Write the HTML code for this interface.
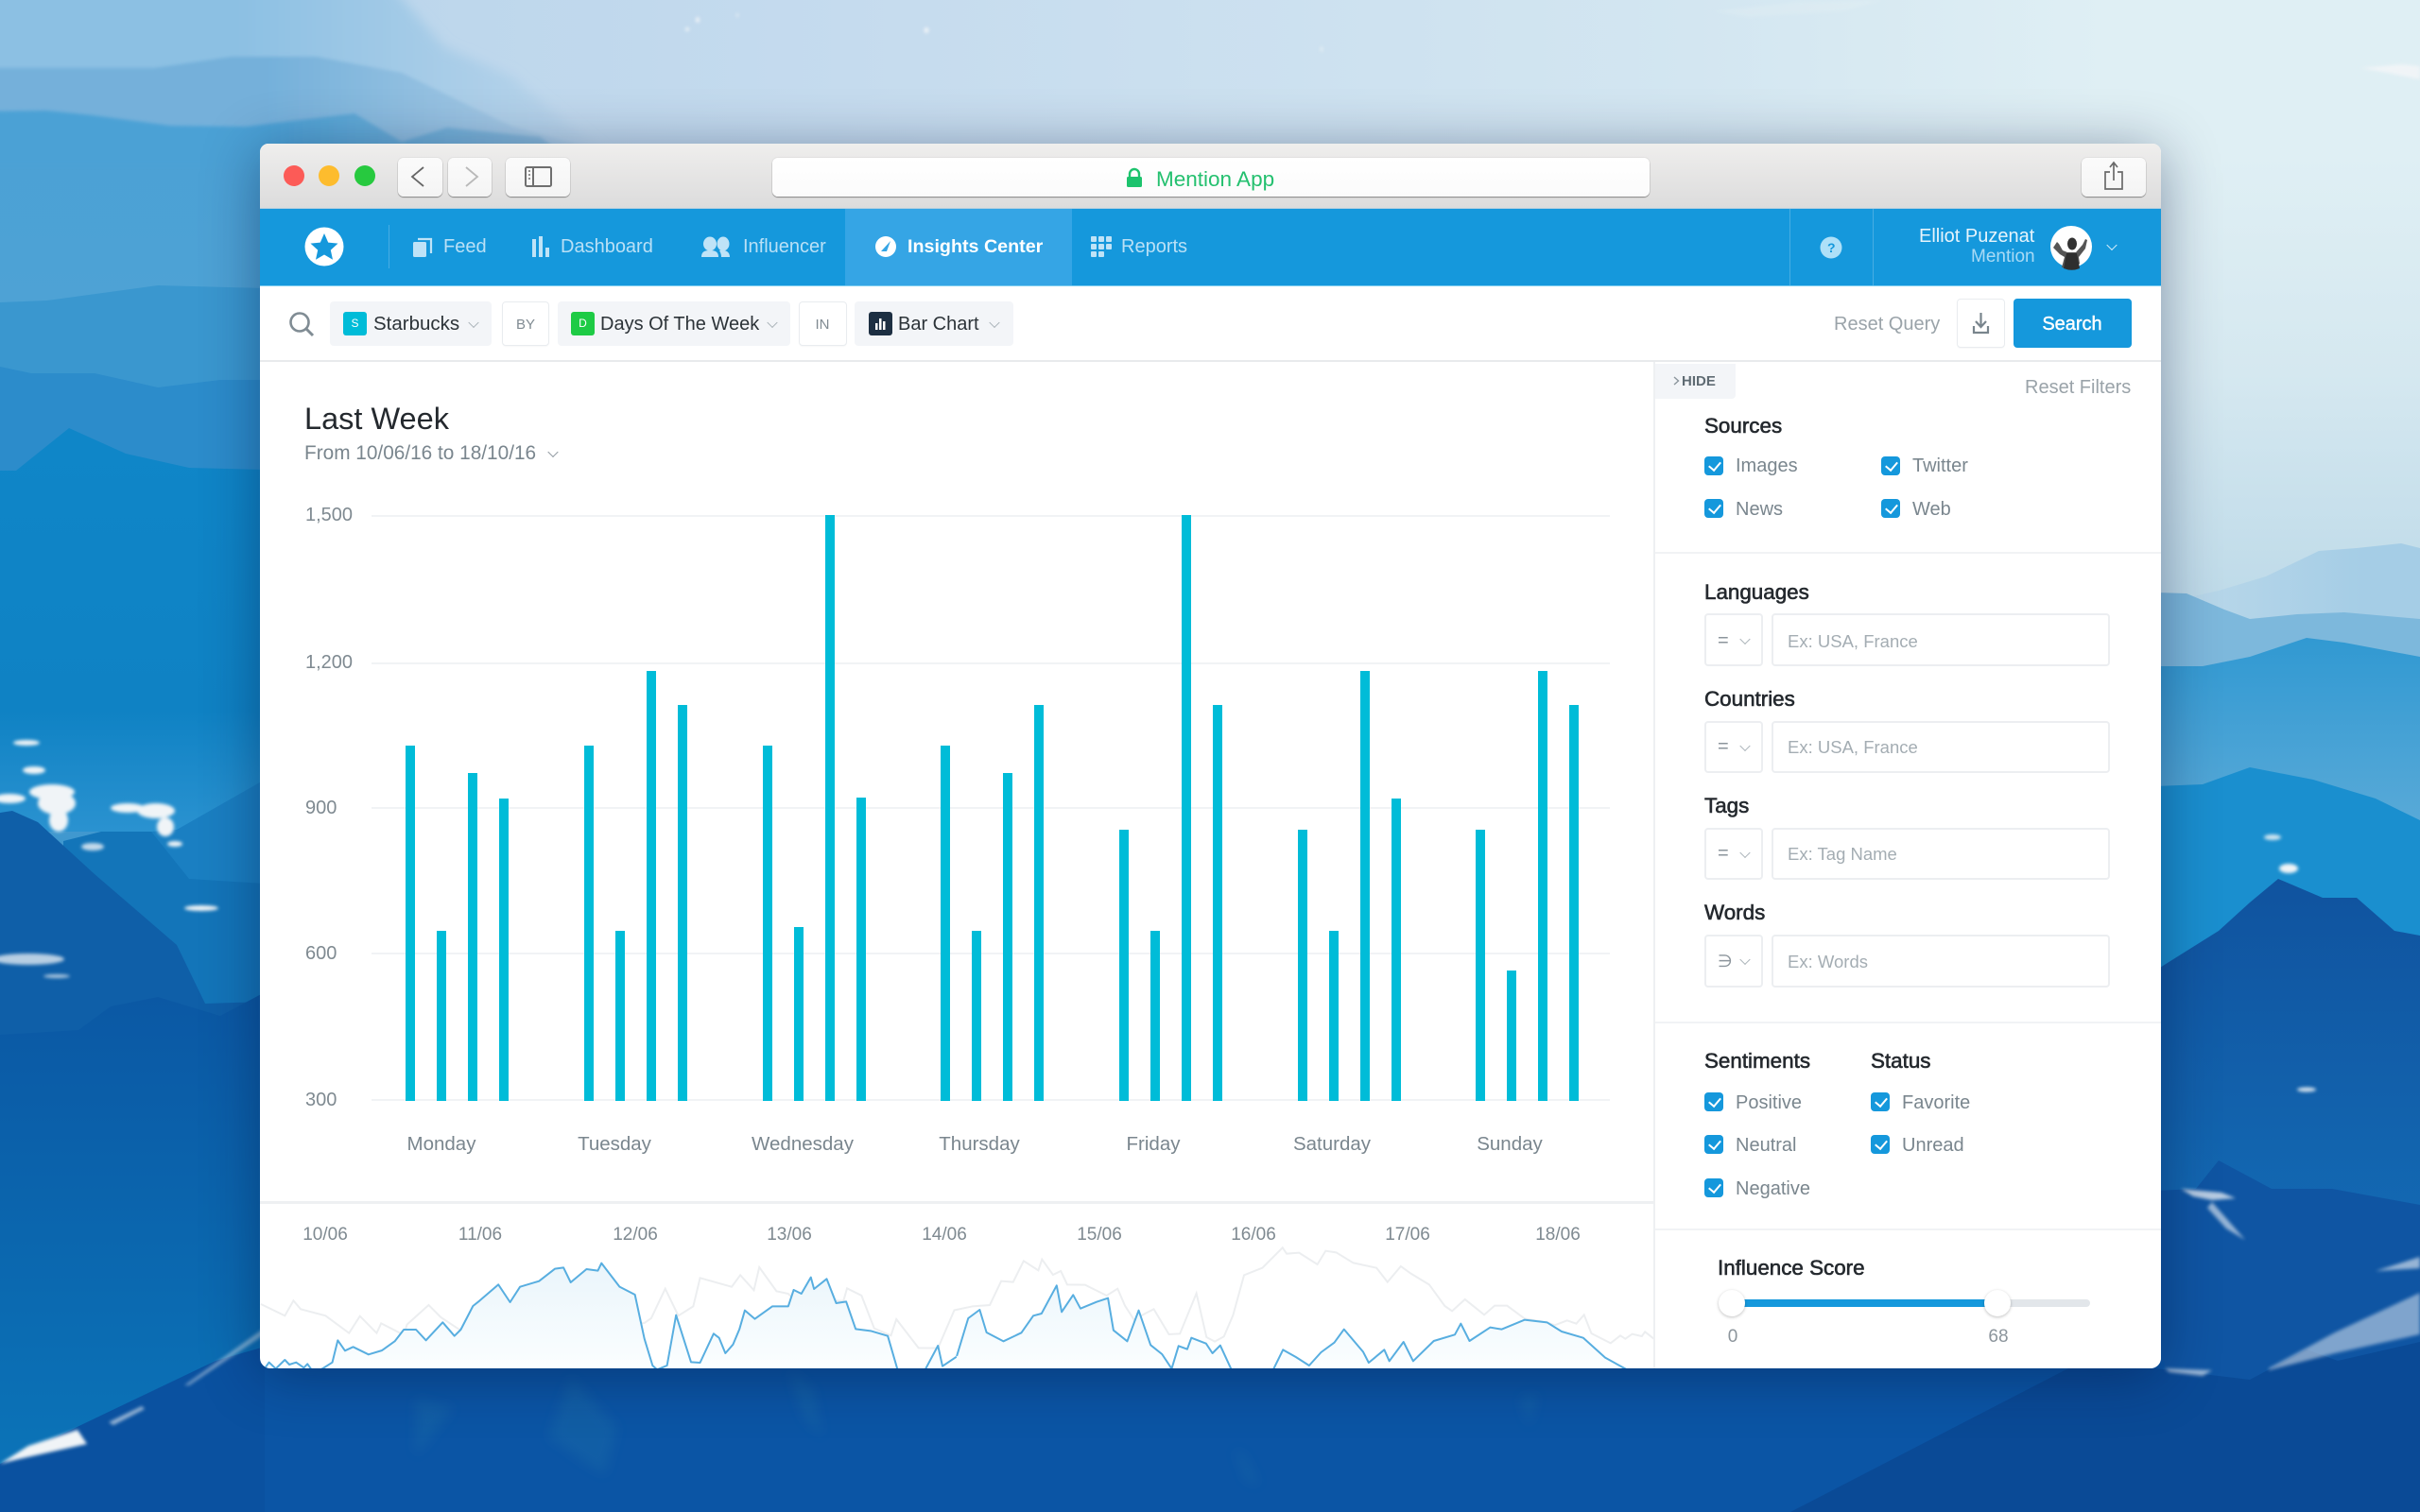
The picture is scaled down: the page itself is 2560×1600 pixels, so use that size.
<!DOCTYPE html>
<html><head><meta charset="utf-8"><title>Mention App</title>
<style>
*{box-sizing:border-box}
html,body{margin:0;padding:0;width:2560px;height:1600px;overflow:hidden;background:#0a55a5;font-family:"Liberation Sans",sans-serif}
#bg{position:absolute;left:0;top:0}
#win{position:absolute;left:275px;top:152px;width:2011px;height:1296px;border-radius:9px 9px 11px 11px;overflow:hidden;background:#fff;box-shadow:0 8px 60px rgba(0,20,60,.42)}
#in{position:absolute;left:-275px;top:-152px;width:2560px;height:1600px}
.b{position:absolute}
.t{position:absolute;line-height:0;white-space:nowrap;font-size:20px;color:#7a868e;margin-top:1px}
.n{color:#b9e0f6}
.h{font-size:22.4px;color:#24292e;-webkit-text-stroke:.6px #24292e}
.p{font-size:18.5px;color:#a4adb3}
.y{color:#7f8a91}
.d{font-size:19px;color:#7f8a91;transform:translateX(-50%)}
.x{transform:translateX(-50%)}
.mac{position:absolute;top:167px;height:41px;background:linear-gradient(#fbfbfb,#f4f4f4);border-radius:6px;box-shadow:0 1px 1px rgba(0,0,0,.38),0 0 0 1px rgba(0,0,0,.04)}
.chip{position:absolute;top:319px;height:47px;background:#f3f5f8;border-radius:4px}
.tag{position:absolute;top:319px;height:47px;background:#fff;border:1px solid #e9ecef;border-radius:4px;box-shadow:0 1px 1px rgba(0,0,0,.03)}
.bd{position:absolute;top:330px;height:25px;width:25px;border-radius:3px;color:#fff;font-size:12px;line-height:25px;text-align:center}
.v{position:absolute;width:8px;height:8px;border:solid #a9b2b8;border-width:0 1.5px 1.5px 0;transform:translate(-50%,-70%) rotate(45deg)}
.c{position:absolute;width:20px;height:20px;border-radius:4px;background:#1598dc;transform:translateY(-50%)}
.c:after{content:"";position:absolute;left:7px;top:3px;width:6px;height:10px;border:solid #fff;border-width:0 2px 2px 0;transform:rotate(40deg)}
.sel,.inp{position:absolute;background:#fff;border:2px solid #eceef1;border-radius:4px}
.sel{left:1803px;width:62px}
.inp{left:1874px;width:358px}
.line{position:absolute;background:#f1f3f5}
</style></head><body>

<svg id="bg" width="2560" height="1600" viewBox="0 0 2560 1600" xmlns="http://www.w3.org/2000/svg">
<defs>
<linearGradient id="sky" x1="0" y1="0" x2="1" y2="0"><stop offset="0" stop-color="#b5d2ea"/><stop offset=".35" stop-color="#c5dbee"/><stop offset=".7" stop-color="#d3e6f1"/><stop offset=".87" stop-color="#dfeff4"/><stop offset="1" stop-color="#dfeff4"/></linearGradient>
<linearGradient id="skyr" x1="0" y1="0" x2="0" y2="1"><stop offset="0" stop-color="#dfeff4"/><stop offset=".25" stop-color="#dfeff4"/><stop offset=".6" stop-color="#d5e8f0"/><stop offset="1" stop-color="#bcd9e8"/></linearGradient>
<linearGradient id="t0" gradientUnits="userSpaceOnUse" x1="250" y1="0" x2="640" y2="0"><stop offset="0" stop-color="#8cc0e3"/><stop offset="1" stop-color="#bdd6eb"/></linearGradient>
<linearGradient id="t1" gradientUnits="userSpaceOnUse" x1="280" y1="0" x2="640" y2="0"><stop offset="0" stop-color="#74b0da"/><stop offset="1" stop-color="#b5d1e8"/></linearGradient>
<linearGradient id="t2" gradientUnits="userSpaceOnUse" x1="280" y1="0" x2="600" y2="0"><stop offset="0" stop-color="#4ba1d5"/><stop offset="1" stop-color="#8fbcdc"/></linearGradient>
<linearGradient id="l5" x1="0" y1="0" x2="0" y2="1"><stop offset="0" stop-color="#0f86c8"/><stop offset=".7" stop-color="#0f82c4"/><stop offset="1" stop-color="#2a92d0"/></linearGradient>
<linearGradient id="l8" x1="0" y1="0" x2="0" y2="1"><stop offset="0" stop-color="#0b58a4"/><stop offset="1" stop-color="#0b74b8"/></linearGradient>
<linearGradient id="rc" x1="0" y1="0" x2="0" y2="1"><stop offset="0" stop-color="#3199d2"/><stop offset="1" stop-color="#5aaad8"/></linearGradient>
<linearGradient id="re" x1="0" y1="0" x2="0" y2="1"><stop offset="0" stop-color="#10539f"/><stop offset="1" stop-color="#1369b3"/></linearGradient>
<linearGradient id="ld" x1="0" y1="0" x2="0" y2="1"><stop offset="0" stop-color="#4ba1d5"/><stop offset=".2" stop-color="#4ea2d5"/><stop offset="1" stop-color="#3a94cc"/></linearGradient>
<linearGradient id="ra" gradientUnits="userSpaceOnUse" x1="2290" y1="0" x2="2500" y2="0"><stop offset="0" stop-color="#bcd9ea"/><stop offset="1" stop-color="#a5cde6"/></linearGradient>
<filter id="bl" x="-30%" y="-30%" width="160%" height="160%"><feGaussianBlur stdDeviation="1.8"/></filter>
<filter id="bm" x="-40%" y="-40%" width="180%" height="180%"><feGaussianBlur stdDeviation="6"/></filter>
</defs>
<rect width="2560" height="1600" fill="url(#sky)"/>
<rect x="2240" width="320" height="660" fill="url(#skyr)"/>
<!-- top left -->
<polygon points="-40,-40 392,-40 470,50 540,80 660,180 -40,180" fill="url(#t0)" filter="url(#bm)"/>
<polygon points="-20,72 163,72 245,60 335,60 425,77 540,133 637,160 -20,160" fill="url(#t1)" filter="url(#bl)"/>
<rect y="140" width="275" height="980" fill="url(#ld)"/>
<polygon points="-20,118 49,117 98,122 180,133 260,134 375,120 425,150 473,135 571,145 600,165 600,175 -20,175" fill="url(#t2)" filter="url(#bl)"/>
<!-- left strip -->
<polygon points="0,320 50,318 167,302 280,305 280,500 0,500" fill="#3a97cf"/>
<polygon points="0,388 33,395 100,395 167,410 233,402 280,402 280,520 0,520" fill="#2c8ccb"/>
<polygon points="0,498 17,498 73,453 133,480 200,495 280,497 280,880 0,880" fill="url(#l5)"/>
<polygon points="160,880 187,878 280,825 280,1100 160,1100" fill="#1a7fc2"/>
<polygon points="67,890 107,880 160,880 200,930 280,935 280,1100 67,1100" fill="#1375b9"/>
<polygon points="0,860 13,858 40,870 100,925 187,1000 217,1062 280,1060 280,1120 0,1120" fill="#0f5fa8"/>
<polygon points="0,1095 83,1090 117,1065 167,1055 233,1075 280,1050 280,1560 0,1560" fill="url(#l8)"/>
<!-- right side -->
<polygon points="2280,640 2347,625 2397,610 2453,583 2493,580 2540,575 2560,580 2560,700 2280,700" fill="url(#ra)"/>
<polygon points="2280,627 2313,628 2353,645 2380,655 2430,650 2480,648 2560,655 2560,760 2280,760" fill="#7db8dc"/>
<polygon points="2280,705 2330,705 2380,695 2440,675 2480,680 2560,695 2560,880 2280,880" fill="url(#rc)"/>
<polygon points="2280,832 2330,830 2380,812 2447,825 2513,845 2560,868 2560,1060 2280,1060" fill="#1a8fcf"/>
<polygon points="2280,1027 2347,985 2380,955 2410,930 2457,950 2493,950 2533,985 2560,990 2560,1300 2280,1300" fill="url(#re)"/>
<polygon points="2280,1260 2323,1258 2347,1228 2403,1258 2467,1258 2560,1275 2560,1460 2280,1460" fill="#0f55a3"/>
<!-- bottom -->
<rect x="270" y="1440" width="2020" height="160" fill="#0b55a5"/>
<polygon points="0,1549 228,1440 280,1425 280,1600 0,1600" fill="#0a51a0"/>
<polygon points="1894,1600 2188,1448 2280,1448 2380,1460 2440,1428 2473,1440 2560,1420 2560,1600" fill="#0a4a96"/>
<g fill="#2a7ea8" filter="url(#bm)" opacity=".22">
<polygon points="604,1457 625,1480 653,1510 640,1560 625,1552 580,1520"/>
<polygon points="835,1450 860,1470 870,1520 850,1500"/>
<polygon points="1306,1533 1316,1540 1332,1572 1318,1566"/>
<polygon points="1608,1480 1626,1475 1618,1510"/>
<polygon points="440,1480 480,1490 440,1540"/>
</g>
<!-- clouds -->
<g fill="#f0f4f7" filter="url(#bl)">
<ellipse cx="28" cy="786" rx="14" ry="3"/>
<ellipse cx="36" cy="815" rx="12" ry="4"/>
<ellipse cx="10" cy="845" rx="17" ry="5"/>
<ellipse cx="55" cy="838" rx="24" ry="8"/><ellipse cx="60" cy="850" rx="20" ry="12"/><ellipse cx="62" cy="868" rx="10" ry="12"/>
<ellipse cx="135" cy="855" rx="18" ry="5"/><ellipse cx="165" cy="858" rx="20" ry="8"/><ellipse cx="175" cy="875" rx="9" ry="10"/><ellipse cx="185" cy="893" rx="8" ry="3"/>
<ellipse cx="98" cy="896" rx="12" ry="4" opacity=".8"/>
<ellipse cx="213" cy="961" rx="18" ry="3"/>
<ellipse cx="30" cy="1015" rx="38" ry="6" opacity=".75"/><ellipse cx="60" cy="1033" rx="14" ry="2" opacity=".7"/>
<polygon points="0,1549 30,1530 82,1513 92,1528 20,1544"/>
<polygon points="115,1505 150,1488 153,1491 120,1508" opacity=".6"/>
<polygon points="195,1466 280,1405 280,1412 200,1466" opacity=".45"/>
<ellipse cx="2404" cy="886" rx="9" ry="3" opacity=".85"/>
<ellipse cx="2421" cy="919" rx="10" ry="5"/>
<ellipse cx="2440" cy="1153" rx="10" ry="2.500" opacity=".85"/>
<polygon points="2307,1258 2350,1262 2365,1268 2340,1270 2320,1266" opacity=".75"/>
<polygon points="2340,1272 2375,1312 2355,1300 2335,1278" opacity=".6"/>
<polygon points="2513,1345 2560,1330 2560,1342" opacity=".6"/>
<polygon points="2400,1448 2470,1410 2560,1368 2560,1412 2470,1432 2400,1450" opacity=".5"/>
<polygon points="2290,1448 2340,1450 2330,1456 2295,1452" opacity=".6"/>
<polygon points="2497,72 2540,68 2560,70 2560,84 2520,76"/>
<polygon points="1812,12 1900,2 1992,0 1950,12 1850,18" opacity=".2"/>
<ellipse cx="738" cy="21" rx="2" ry="3"/><ellipse cx="980" cy="32" rx="2.500" ry="3"/><ellipse cx="727" cy="31" rx="2" ry="2"/><ellipse cx="780" cy="16" rx="1" ry="2"/><ellipse cx="1398" cy="52" rx="1" ry="3"/>
</g>
</svg>

<div id="win"><div id="in">

<!-- title bar -->
<div class="b" style="left:275px;top:152px;width:2011px;height:69px;background:linear-gradient(#efeeed,#dcdcdc);border-bottom:1px solid #b4cfdf"></div>
<div class="b" style="left:300px;top:175px;width:22px;height:22px;border-radius:50%;background:#fc5b57"></div>
<div class="b" style="left:337px;top:175px;width:22px;height:22px;border-radius:50%;background:#fdbc2e"></div>
<div class="b" style="left:375px;top:175px;width:22px;height:22px;border-radius:50%;background:#27c93f"></div>
<div class="mac" style="left:421px;width:47px"></div>
<div class="mac" style="left:474px;width:46px"></div>
<div class="mac" style="left:535px;width:68px"></div>
<div class="mac" style="left:817px;width:928px;background:linear-gradient(#ffffff,#fbfbfb)"></div>
<div class="mac" style="left:2202px;width:68px"></div>
<svg class="b" style="left:0;top:0" width="2560" height="240" fill="none">
<path d="M448 177 L436 187 L448 197" stroke="#666" stroke-width="1.800"/>
<path d="M493 177 L505 187 L493 197" stroke="#b9b9b9" stroke-width="1.800"/>
<rect x="556" y="177" width="27" height="20" rx="1.500" stroke="#6f6f6f" stroke-width="2"/><path d="M564 177 V197" stroke="#6f6f6f" stroke-width="2"/><path d="M559 181h2M559 185h2M559 189h2" stroke="#6f6f6f" stroke-width="1.500"/>
<path d="M2232 182 H2227 V200 H2245 V182 H2240 M2236 191 V173 M2232 177 L2236 172 L2240 177" stroke="#6a6a6a" stroke-width="1.700"/>
<rect x="1192" y="187" width="16" height="11" rx="1.500" fill="#1dc36d"/><path d="M1195 188 V184 a5 5 0 0 1 10 0 V188" stroke="#1dc36d" stroke-width="2.400"/>
</svg>
<div class="t" style="left:1223px;top:188.500px;font-size:22.500px;color:#24c06f">Mention App</div>

<!-- nav -->
<div class="b" style="left:275px;top:221px;width:2011px;height:82px;background:#1598dc;border-bottom:1px solid #7ccdf0"></div>
<div class="b" style="left:894px;top:221px;width:240px;height:81px;background:#35a5e5"></div>
<div class="b" style="left:411px;top:238px;width:1px;height:46px;background:#48ade3"></div>
<div class="b" style="left:1893px;top:221px;width:1px;height:81px;background:#48ade3"></div>
<div class="b" style="left:1981px;top:221px;width:1px;height:81px;background:#48ade3"></div>
<svg class="b" style="left:0;top:0" width="2560" height="303">
<circle cx="343" cy="261" r="20.500" fill="#fff"/>
<polygon points="343,247 347.200,256.600 357.500,257.600 349.800,264.600 352,274.800 343,269.500 334,274.800 336.200,264.600 328.500,257.600 338.800,256.600" fill="#1598dc"/>
<rect x="437" y="256" width="14" height="16" rx="1.500" fill="#bfe3f7"/><path d="M442 253 H456 V268" fill="none" stroke="#bfe3f7" stroke-width="2.200"/>
<rect x="563" y="253" width="4" height="19" fill="#bfe3f7"/><rect x="570" y="250" width="4" height="22" fill="#bfe3f7"/><rect x="577" y="262" width="4" height="10" fill="#bfe3f7"/>
<g fill="#bfe3f7"><ellipse cx="751" cy="258" rx="7" ry="7.500"/><path d="M742 272 c0-6 4-7 9-7 s9 1 9 7z"/><ellipse cx="765" cy="258" rx="6.500" ry="7.500"/><path d="M761 265 c6-1 11 1 11 7 h-9 c0-3-1-5-2-7z"/></g>
<circle cx="937" cy="261" r="11" fill="#fff"/><path d="M932 266 L942 255 L938 266z" fill="#35a5e5"/>
<g fill="#bfe3f7"><rect x="1154" y="250" width="6" height="6" rx="1"/><rect x="1162" y="250" width="6" height="6" rx="1"/><rect x="1170" y="250" width="6" height="6" rx="1"/><rect x="1154" y="258" width="6" height="6" rx="1"/><rect x="1162" y="258" width="6" height="6" rx="1"/><rect x="1170" y="258" width="6" height="6" rx="1"/><rect x="1154" y="266" width="6" height="6" rx="1"/><rect x="1162" y="266" width="6" height="6" rx="1"/></g>
<circle cx="1937" cy="262" r="11.500" fill="#aee0f8"/>
<circle cx="2191" cy="261" r="22" fill="#fff"/>
<path d="M2172 262 l4-6 2 2 4 7 5 2 h9 l7-8 3-6 2 1 -2 9 -7 9 1 7 a22 22 0 0 1 -19 4 l3-11 -5-3z" fill="#555"/>
<path d="M2186 268 h11 l3 16 a22 22 0 0 1 -17 0z" fill="#2e2e2e"/>
<ellipse cx="2192" cy="258" rx="5" ry="6.500" fill="#333"/>
</svg>
<div class="t n" style="left:469px;top:260px">Feed</div>
<div class="t n" style="left:593px;top:260px">Dashboard</div>
<div class="t n" style="left:786px;top:260px">Influencer</div>
<div class="t" style="left:960px;top:260px;color:#fff;font-weight:700;font-size:19.700px">Insights Center</div>
<div class="t n" style="left:1186px;top:260px">Reports</div>
<div class="t" style="left:1933px;top:261px;font-size:14px;font-weight:700;color:#1598dc">?</div>
<div class="t" style="left:2030px;top:249px;font-size:20px;color:#e6f4fc">Elliot Puzenat</div>
<div class="t" style="left:2085px;top:271px;font-size:19px;color:#a9daf5">Mention</div>
<div class="v" style="left:2234px;top:261px;border-color:#dff2fc"></div>

<!-- toolbar -->
<div class="b" style="left:275px;top:303px;width:2011px;height:80px;background:#fff;border-bottom:2px solid #e8eaec"></div>
<svg class="b" style="left:0;top:0" width="340" height="370" fill="none"><circle cx="317" cy="341" r="9.500" stroke="#808c94" stroke-width="2.600"/><path d="M324 348 L331 355" stroke="#808c94" stroke-width="3"/></svg>
<div class="chip" style="left:349px;width:171px"></div>
<div class="bd" style="left:363px;background:#00bcd8">S</div>
<div class="t" style="left:395px;top:342px;font-size:20.500px;color:#2c3338">Starbucks</div>
<div class="v" style="left:501px;top:343px"></div>
<div class="tag" style="left:531px;width:50px"></div>
<div class="t x" style="left:556px;top:343px;font-size:15px;color:#808b92">BY</div>
<div class="chip" style="left:590px;width:246px"></div>
<div class="bd" style="left:604px;background:#1ecb45">D</div>
<div class="t" style="left:635px;top:342px;color:#2c3338">Days Of The Week</div>
<div class="v" style="left:817px;top:343px"></div>
<div class="tag" style="left:845px;width:51px"></div>
<div class="t x" style="left:870px;top:343px;font-size:15px;color:#808b92">IN</div>
<div class="chip" style="left:904px;width:168px"></div>
<div class="bd" style="left:919px;background:#1d2f42"></div>
<svg class="b" style="left:919px;top:330px" width="25" height="25"><rect x="7" y="12" width="2.500" height="7" fill="#fff"/><rect x="11" y="7" width="2.500" height="12" fill="#fff"/><rect x="15" y="10" width="2.500" height="9" fill="#fff"/></svg>
<div class="t" style="left:950px;top:342px;color:#2c3338">Bar Chart</div>
<div class="v" style="left:1052px;top:343px"></div>
<div class="t" style="left:1940px;top:342px;color:#9aa3a9">Reset Query</div>
<div class="tag" style="left:2070px;top:316px;width:51px;height:52px"></div>
<svg class="b" style="left:2070px;top:316px" width="51" height="52" fill="none"><path d="M25.500 15 V29 M20 24 L25.500 30 L31 24" stroke="#79858d" stroke-width="2.200"/><path d="M18 29 V36 H33 V29" stroke="#79858d" stroke-width="2.200"/></svg>
<div class="b" style="left:2130px;top:316px;width:125px;height:52px;background:#1598dc;border-radius:4px"></div>
<div class="t x" style="left:2192px;top:342px;color:#fff;-webkit-text-stroke:.4px #fff">Search</div>

<!-- main -->
<div class="t" style="left:322px;top:442px;font-size:32.500px;color:#24292e">Last Week</div>
<div class="t" style="left:322px;top:479px;font-size:20.800px;color:#7a868e">From 10/06/16 to 18/10/16</div>
<div class="v" style="left:585px;top:480px;border-color:#8c969d"></div>
<div class="t y" style="left:323px;top:544px">1,500</div>
<div class="t y" style="left:323px;top:700px">1,200</div>
<div class="t y" style="left:323px;top:854px">900</div>
<div class="t y" style="left:323px;top:1008px">600</div>
<div class="t y" style="left:323px;top:1163px">300</div>
<div class="line" style="left:393px;top:545px;width:1310px;height:2px"></div>
<div class="line" style="left:393px;top:701px;width:1310px;height:2px"></div>
<div class="line" style="left:393px;top:854px;width:1310px;height:2px"></div>
<div class="line" style="left:393px;top:1008px;width:1310px;height:2px"></div>
<div class="line" style="left:393px;top:1163px;width:1310px;height:2px"></div>
<svg class="b" style="left:0;top:0" width="1750" height="1170" fill="#00bcd8">
<rect x="429" y="789" width="10" height="376"/><rect x="462" y="985" width="10" height="180"/><rect x="495" y="818" width="10" height="347"/><rect x="528" y="845" width="10" height="320"/>
<rect x="618" y="789" width="10" height="376"/><rect x="651" y="985" width="10" height="180"/><rect x="684" y="710" width="10" height="455"/><rect x="717" y="746" width="10" height="419"/>
<rect x="807" y="789" width="10" height="376"/><rect x="840" y="981" width="10" height="184"/><rect x="873" y="545" width="10" height="620"/><rect x="906" y="844" width="10" height="321"/>
<rect x="995" y="789" width="10" height="376"/><rect x="1028" y="985" width="10" height="180"/><rect x="1061" y="818" width="10" height="347"/><rect x="1094" y="746" width="10" height="419"/>
<rect x="1184" y="878" width="10" height="287"/><rect x="1217" y="985" width="10" height="180"/><rect x="1250" y="545" width="10" height="620"/><rect x="1283" y="746" width="10" height="419"/>
<rect x="1373" y="878" width="10" height="287"/><rect x="1406" y="985" width="10" height="180"/><rect x="1439" y="710" width="10" height="455"/><rect x="1472" y="845" width="10" height="320"/>
<rect x="1561" y="878" width="10" height="287"/><rect x="1594" y="1027" width="10" height="138"/><rect x="1627" y="710" width="10" height="455"/><rect x="1660" y="746" width="10" height="419"/>
</svg>
<div class="t x" style="left:467px;top:1210px;font-size:20.500px">Monday</div>
<div class="t x" style="left:650px;top:1210px;font-size:20.500px">Tuesday</div>
<div class="t x" style="left:849px;top:1210px;font-size:20.500px">Wednesday</div>
<div class="t x" style="left:1036px;top:1210px;font-size:20.500px">Thursday</div>
<div class="t x" style="left:1220px;top:1210px;font-size:20.500px">Friday</div>
<div class="t x" style="left:1409px;top:1210px;font-size:20.500px">Saturday</div>
<div class="t x" style="left:1597px;top:1210px;font-size:20.500px">Sunday</div>

<!-- overview -->
<div class="b" style="left:275px;top:1271px;width:1475px;height:3px;background:#eef0f2"></div>
<div class="t d" style="left:344px;top:1306px">10/06</div>
<div class="t d" style="left:508px;top:1306px">11/06</div>
<div class="t d" style="left:672px;top:1306px">12/06</div>
<div class="t d" style="left:835px;top:1306px">13/06</div>
<div class="t d" style="left:999px;top:1306px">14/06</div>
<div class="t d" style="left:1163px;top:1306px">15/06</div>
<div class="t d" style="left:1326px;top:1306px">16/06</div>
<div class="t d" style="left:1489px;top:1306px">17/06</div>
<div class="t d" style="left:1648px;top:1306px">18/06</div>
<svg class="b" style="left:0;top:0" width="1760" height="1448" fill="none">
<defs><linearGradient id="af" gradientUnits="userSpaceOnUse" x1="0" y1="230" x2="0" y2="570"><stop offset="0" stop-color="#eaf5fb"/><stop offset="1" stop-color="#fbfeff"/></linearGradient></defs>
<g transform="translate(275 1260) scale(.47847 .33333)">
<polyline vector-effect="non-scaling-stroke" stroke="#eceef0" stroke-width="2" points="2,360 55,397 74,349 90,376 145,397 197,452 221,398 258,452 268,421 318,458 325,425 373,363 400,402 440,440 850,420 865,405 896,311 925,397 958,367 973,277 1043,305 1062,268 1092,316 1104,243 1142,319 1168,327 1180,345 1290,350 1298,310 1330,333 1358,437 1395,460 1407,408 1456,499 1499,500 1535,380"/>
<polygon fill="url(#af)" points="2,570 20,545 35,565 55,537 65,552 80,545 97,562 105,550 115,565 138,565 160,545 172,475 188,508 206,496 240,520 270,507 298,478 318,441 345,441 367,475 404,418 430,461 444,441 471,366 485,350 527,298 553,354 575,305 617,287 652,248 671,244 687,291 722,249 747,254 755,230 795,305 829,330 850,470 868,555 878,568 900,555 920,395 953,544 973,546 1003,454 1015,467 1029,516 1046,488 1060,440 1072,380 1094,407 1133,367 1168,367 1180,315 1197,327 1218,275 1225,312 1253,280 1274,357 1296,352 1317,439 1350,445 1388,461 1410,570 1470,570 1499,492 1509,557 1542,527 1542,570"/>
<polyline vector-effect="non-scaling-stroke" stroke="#58aee0" stroke-width="2" stroke-linejoin="round" points="5,575 20,545 35,565 55,537 65,552 80,545 97,562 105,550 115,570"/>
<polyline vector-effect="non-scaling-stroke" stroke="#58aee0" stroke-width="2" stroke-linejoin="round" points="130,570 138,565 160,545 172,475 188,508 206,496 240,520 270,507 298,478 318,441 345,441 367,475 404,418 430,461 444,441 471,366 485,350 527,298 553,354 575,305 617,287 652,248 671,244 687,291 722,249 747,254 755,230 795,305 829,330 850,470 868,555 878,568 900,555 920,395 953,544 973,546 1003,454 1015,467 1029,516 1046,488 1060,440 1072,380 1094,407 1133,367 1168,367 1180,315 1197,327 1218,275 1225,312 1253,280 1274,357 1296,352 1317,439 1350,445 1388,461 1410,570"/>
<polyline vector-effect="non-scaling-stroke" stroke="#58aee0" stroke-width="2" stroke-linejoin="round" points="1470,570 1499,492 1509,557 1540,527"/>
</g>
<g transform="translate(1000 1260) scale(.48473 .33333)">
<polyline vector-effect="non-scaling-stroke" stroke="#eceef0" stroke-width="2" points="18,380 60,367 97,363 122,287 148,290 171,223 203,253 211,218 235,267 252,255 266,298 305,299 352,333 376,311 392,365 412,410 436,390 455,376 488,456 512,454 548,326 570,465 588,479 608,463 628,395 652,268 692,245 736,181 745,200 772,197 812,234 830,191 853,196 890,229 941,245 965,290 994,240 1016,263 1056,298 1090,366 1106,382 1134,345 1176,394 1199,365 1226,365 1264,406 1313,418 1330,427 1357,412 1377,422 1394,394 1410,453 1452,484 1473,460 1484,470 1499,455 1520,462 1527,448 1548,472"/>
<polygon fill="url(#af)" points="25,570 25,525 50,405 75,378 90,450 127,478 166,451 192,397 210,390 243,301 254,385 279,331 295,374 330,353 355,341 367,443 397,478 422,380 448,490 473,519 494,565 509,493 528,503 537,467 569,485 583,516 600,491 625,570 715,570 737,505 765,528 794,555 820,513 849,482 870,440 912,512 924,546 958,505 969,541 1000,480 1021,541 1066,477 1112,457 1125,422 1144,477 1189,434 1214,440 1264,410 1313,418 1345,447 1392,467 1440,530 1490,570"/>
<polyline vector-effect="non-scaling-stroke" stroke="#58aee0" stroke-width="2" stroke-linejoin="round" points="25,525 50,405 75,378 90,450 127,478 166,451 192,397 210,390 243,301 254,385 279,331 295,374 330,353 355,341 367,443 397,478 422,380 448,490 473,519 494,565 509,493 528,503 537,467 569,485 583,516 600,491 625,570"/>
<polyline vector-effect="non-scaling-stroke" stroke="#58aee0" stroke-width="2" stroke-linejoin="round" points="715,570 737,505 765,528 794,555 820,513 849,482 870,440 912,512 924,546 958,505 969,541 1000,480 1021,541 1066,477 1112,457 1125,422 1144,477 1189,434 1214,440 1264,410 1313,418 1345,447 1392,467 1440,530 1490,570"/>
</g>
</svg>

<!-- sidebar -->
<div class="b" style="left:1749px;top:383px;width:537px;height:1065px;background:#fff;border-left:2px solid #eef0f2"></div>
<div class="b" style="left:1751px;top:385px;width:85px;height:37px;background:#f3f5f8;border-radius:0 0 4px 0"></div>
<div class="t" style="left:1779px;top:403px;font-size:15px;font-weight:700;color:#5f6b73">HIDE</div>
<svg class="b" style="left:1768px;top:396px" width="10" height="14" fill="none"><path d="M3 3 L7.500 7 L3 11" stroke="#8b959c" stroke-width="1.400"/></svg>
<div class="t" style="left:2142px;top:409px;color:#9aa3a9">Reset Filters</div>
<div class="t h" style="left:1803px;top:450px">Sources</div>
<div class="c" style="left:1803px;top:492.500px"></div><div class="t" style="left:1836px;top:492px">Images</div>
<div class="c" style="left:1990px;top:492.500px"></div><div class="t" style="left:2023px;top:492px">Twitter</div>
<div class="c" style="left:1803px;top:537.500px"></div><div class="t" style="left:1836px;top:538px">News</div>
<div class="c" style="left:1990px;top:537.500px"></div><div class="t" style="left:2023px;top:538px">Web</div>
<div class="line" style="left:1751px;top:584px;width:535px;height:2px"></div>

<div class="t h" style="left:1803px;top:626px">Languages</div>
<div class="sel" style="top:649px;height:56px"></div><div class="inp" style="top:649px;height:56px"></div>
<div class="t" style="left:1817px;top:677px;color:#8c959c">=</div><div class="v" style="left:1846px;top:678px"></div>
<div class="t p" style="left:1891px;top:678px">Ex: USA, France</div>

<div class="t h" style="left:1803px;top:739px">Countries</div>
<div class="sel" style="top:763px;height:55px"></div><div class="inp" style="top:763px;height:55px"></div>
<div class="t" style="left:1817px;top:789px;color:#8c959c">=</div><div class="v" style="left:1846px;top:791px"></div>
<div class="t p" style="left:1891px;top:790px">Ex: USA, France</div>

<div class="t h" style="left:1803px;top:852px">Tags</div>
<div class="sel" style="top:876px;height:55px"></div><div class="inp" style="top:876px;height:55px"></div>
<div class="t" style="left:1817px;top:902px;color:#8c959c">=</div><div class="v" style="left:1846px;top:904px"></div>
<div class="t p" style="left:1891px;top:903px">Ex: Tag Name</div>

<div class="t h" style="left:1803px;top:965px">Words</div>
<div class="sel" style="top:989px;height:56px"></div><div class="inp" style="top:989px;height:56px"></div>
<div class="t" style="left:1817px;top:1016px;color:#8c959c;font-size:18px">∋</div><div class="v" style="left:1846px;top:1017px"></div>
<div class="t p" style="left:1891px;top:1017px">Ex: Words</div>
<div class="line" style="left:1751px;top:1081px;width:535px;height:2px"></div>

<div class="t h" style="left:1803px;top:1122px">Sentiments</div>
<div class="t h" style="left:1979px;top:1122px">Status</div>
<div class="c" style="left:1803px;top:1165.500px"></div><div class="t" style="left:1836px;top:1165.500px">Positive</div>
<div class="c" style="left:1979px;top:1165.500px"></div><div class="t" style="left:2012px;top:1165.500px">Favorite</div>
<div class="c" style="left:1803px;top:1210.500px"></div><div class="t" style="left:1836px;top:1211px">Neutral</div>
<div class="c" style="left:1979px;top:1210.500px"></div><div class="t" style="left:2012px;top:1211px">Unread</div>
<div class="c" style="left:1803px;top:1256.500px"></div><div class="t" style="left:1836px;top:1256.500px">Negative</div>
<div class="line" style="left:1751px;top:1300px;width:535px;height:2px"></div>

<div class="t h" style="left:1817px;top:1341px">Influence Score</div>
<div class="b" style="left:1832px;top:1375px;width:379px;height:8px;border-radius:4px;background:#e2e6ea"></div>
<div class="b" style="left:1832px;top:1375px;width:281px;height:8px;background:#1598dc"></div>
<div class="b" style="left:1818px;top:1365px;width:28px;height:28px;border-radius:50%;background:#fff;box-shadow:0 1px 3px rgba(0,0,0,.25)"></div>
<div class="b" style="left:2099px;top:1365px;width:28px;height:28px;border-radius:50%;background:#fff;box-shadow:0 1px 3px rgba(0,0,0,.25)"></div>
<div class="t x" style="left:1833px;top:1414px;font-size:19px;color:#8c959c">0</div>
<div class="t x" style="left:2114px;top:1414px;font-size:19px;color:#8c959c">68</div>

</div></div>
</body></html>
